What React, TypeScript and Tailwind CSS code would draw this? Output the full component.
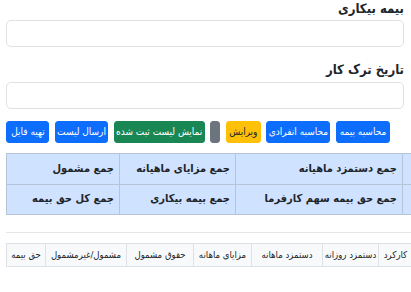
import React from "react";

const font = { fontFamily: "'DejaVu Sans Condensed', 'DejaVu Sans', sans-serif" };

const buttons = [
  { label: "محاسبه بیمه", cls: "bg-[#0d6efd] text-white border-[#0d6efd] w-[54px]" },
  { label: "محاسبه انفرادی", cls: "bg-[#0d6efd] text-white border-[#0d6efd] w-[64px]" },
  { label: "ویرایش", cls: "bg-[#ffc107] text-[#212529] border-[#ffc107] w-[35px]" },
  { label: "", cls: "bg-[#6c757d] text-white border-[#6c757d] w-[10px]" },
  { label: "نمایش لیست ثبت شده", cls: "bg-[#198754] text-white border-[#198754] w-[91px]" },
  { label: "ارسال لیست", cls: "bg-[#0d6efd] text-white border-[#0d6efd] w-[53px]" },
  { label: "تهیه فایل", cls: "bg-[#0d6efd] text-white border-[#0d6efd] w-[43px]" },
];

const summary = [
  ["جمع دستمزد ماهیانه", "جمع مزایای ماهیانه", "جمع مشمول"],
  ["جمع حق بیمه سهم کارفرما", "جمع بیمه بیکاری", "جمع کل حق بیمه"],
];

const headers = [
  { label: "کارکرد", w: "w-[34px]" },
  { label: "دستمزد روزانه", w: "w-[56px]" },
  { label: "دستمزد ماهانه", w: "w-[71px]" },
  { label: "مزایای ماهانه", w: "w-[58px]" },
  { label: "حقوق مشمول", w: "w-[67px]" },
  { label: "مشمول/غیرمشمول", w: "w-[81px]" },
  { label: "حق بیمه", w: "w-[39px]" },
];

export default function App() {
  return (
    <div dir="rtl" className="w-[411px] h-[292px] overflow-hidden bg-white text-[#212529]" style={font}>
      <div className="pr-[7px] pl-[6px]">
        <label className="block h-[20px] text-[13px] font-bold leading-[17px]">بیمه بیکاری</label>
        <div className="h-[27px] rounded-[5px] border border-[#dee2e6]" />
        <label className="block mt-[13px] h-[22px] pt-[1px] text-[13px] font-bold leading-[17px]">تاریخ ترک کار</label>
        <div className="h-[27px] rounded-[5px] border border-[#dee2e6]" />

        <div className="flex gap-[5.6px] mt-[12px] pr-[14px]">
          {buttons.map((b, i) => (
            <div
              key={i}
              className={`h-[22px] shrink-0 rounded-[3px] border flex items-center justify-center text-[10px] leading-none whitespace-nowrap ${b.cls}`}
            >
              {b.label}
            </div>
          ))}
        </div>
      </div>

      <div dir="ltr" className="pl-[6px] mt-[10px]">
        <table dir="rtl" className="table-fixed border-collapse w-[450px] bg-[#cfe2ff] text-[11px] font-bold">
          <colgroup>
            <col className="w-[54px]" />
            <col className="w-[167px]" />
            <col className="w-[116px]" />
            <col className="w-[113px]" />
          </colgroup>
          <tbody>
            {summary.map((row, r) => (
              <tr key={r} className={r === 0 ? "h-[31px]" : "h-[30px]"}>
                <td className="border border-[#b6c4da] px-[3px] whitespace-nowrap overflow-hidden">جمع</td>
                {row.map((c, i) => (
                  <td key={i} className="border border-[#b6c4da] px-[5px] whitespace-nowrap">
                    {c}
                  </td>
                ))}
              </tr>
            ))}
          </tbody>
        </table>
      </div>

      <div className="ml-[6px] mt-[17px] border-t border-[#e3e5e8]" />

      <div dir="ltr" className="pl-[6px] mt-[10px]">
        <table dir="rtl" className="table-fixed border-collapse w-[406px] text-[9.5px]">
          <thead>
            <tr className="h-[23px] bg-[#f8f9fa]">
              {headers.map((h) => (
                <th key={h.label} className={`${h.w} border border-[#dee2e6] px-0 font-normal text-center whitespace-nowrap`}>
                  {h.label}
                </th>
              ))}
            </tr>
          </thead>
        </table>
      </div>
    </div>
  );
}
